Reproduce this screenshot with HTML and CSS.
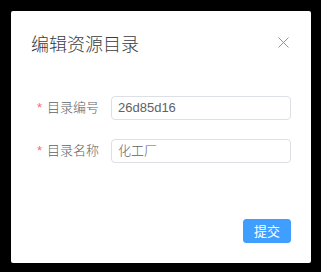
FILE: index.html
```html
<!DOCTYPE html>
<html lang="zh">
<head>
<meta charset="utf-8">
<link rel="stylesheet" href="styles.css">
</head>
<body>
<div class="dialog">
  <div class="header">
    <span class="title">编辑资源目录</span>
    <button class="close" aria-label="close">
      <svg width="11" height="11" viewBox="0 0 11 11"><path d="M0.5 0.5L10.5 10.5M10.5 0.5L0.5 10.5" stroke="#909399" stroke-width="1" fill="none"/></svg>
    </button>
  </div>
  <div class="body">
    <div class="form-item">
      <label class="label"><span class="star">*</span>目录编号</label>
      <div class="input">26d85d16</div>
    </div>
    <div class="form-item">
      <label class="label"><span class="star">*</span>目录名称</label>
      <div class="input">化工厂</div>
    </div>
  </div>
  <div class="footer">
    <button class="btn">提交</button>
  </div>
</div>
</body>
</html>
```
FILE: styles.css
```css
html, body {
  margin: 0;
  padding: 0;
  background: #000;
  font-family: "Liberation Sans", "Noto Sans CJK SC", sans-serif;
}
body {
  padding: 11px 10px 9px 11px;
}
.dialog {
  width: 300px;
  height: 252px;
  background: #fff;
  border-radius: 2px;
  display: flex;
  flex-direction: column;
  box-sizing: border-box;
}
.header {
  padding: 20px 20px 10px;
  display: flex;
  justify-content: space-between;
  align-items: flex-start;
}
.title {
  font-size: 18px;
  line-height: 24px;
  color: #3a3b3e;
  font-weight: 300;
  font-family: "Noto Sans CJK SC", sans-serif;
}
.close {
  border: 0;
  background: none;
  padding: 0;
  margin-top: 6px;
  margin-right: 2px;
  width: 11px;
  height: 11px;
  display: flex;
}
.body {
  padding: 30px 20px;
  flex: 1;
}
.form-item {
  display: flex;
  align-items: center;
  margin-bottom: 18px;
}
.form-item:last-child {
  margin-bottom: 0;
}
.label {
  width: 80px;
  box-sizing: border-box;
  padding-right: 12px;
  text-align: right;
  font-size: 13px;
  line-height: 24px;
  color: #606266;
  font-weight: 300;
  font-family: "Noto Sans CJK SC", sans-serif;
}
.star {
  color: #f56c6c;
  margin-right: 5px;
  font-family: "Liberation Sans", sans-serif;
}
.input {
  flex: 1;
  height: 24px;
  box-sizing: border-box;
  border: 1px solid #dcdfe6;
  border-radius: 4px;
  padding: 0 6px;
  font-size: 13px;
  line-height: 22px;
  color: #606266;
  font-weight: 300;
}
.footer {
  padding: 10px 20px 20px;
  display: flex;
  justify-content: flex-end;
}
.btn {
  height: 24px;
  padding: 0 10px;
  border: 1px solid #409eff;
  background: #409eff;
  color: #fff;
  border-radius: 3px;
  font-size: 13px;
  line-height: 22px;
  font-family: "Noto Sans CJK SC", sans-serif;
}
```
